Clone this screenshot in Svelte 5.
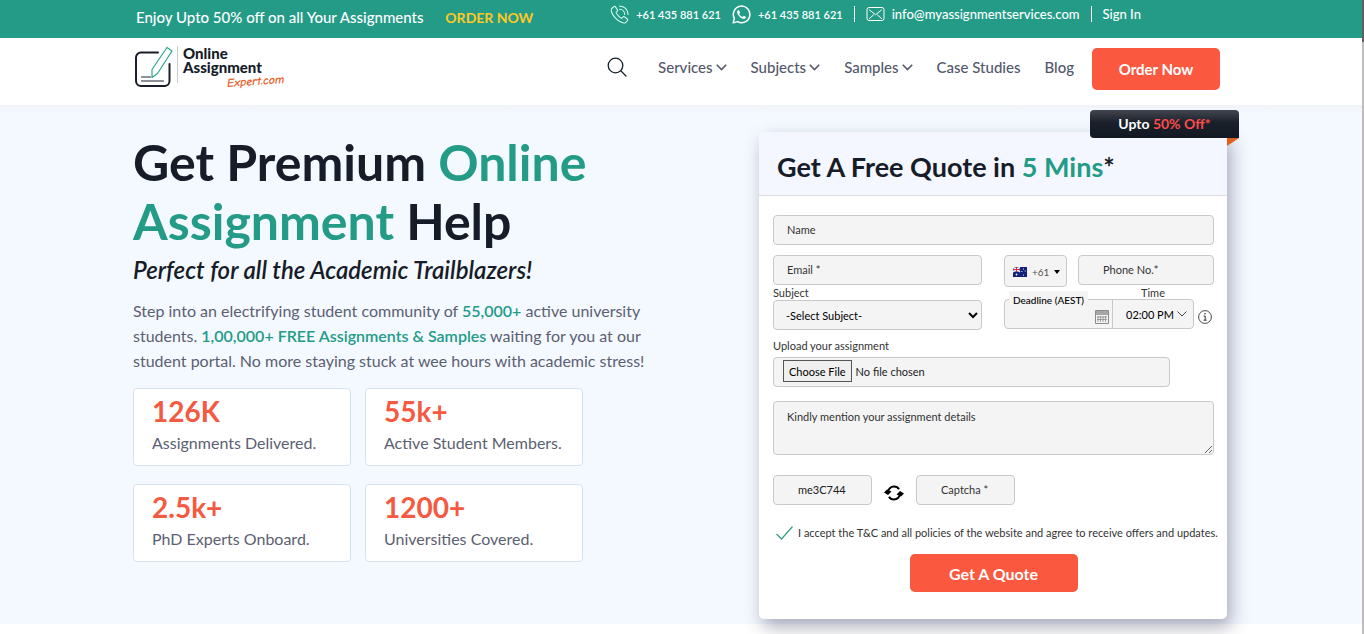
<script lang="ts">
	const nav = [
		{ label: 'Services', menu: true },
		{ label: 'Subjects', menu: true },
		{ label: 'Samples', menu: true },
		{ label: 'Case Studies', menu: false },
		{ label: 'Blog', menu: false }
	];

	const stats = [
		{ value: '126K', label: 'Assignments Delivered.' },
		{ value: '55k+', label: 'Active Student Members.' },
		{ value: '2.5k+', label: 'PhD Experts Onboard.' },
		{ value: '1200+', label: 'Universities Covered.' }
	];

	let accepted = $state(true);
</script>

<svelte:head>
	<title>Online Assignment Help</title>
</svelte:head>

<div class="page">
	<div class="topbar">
		<div class="container topbar-inner">
			<p class="promo">Enjoy Upto 50% off on all Your Assignments <a href="/order">ORDER NOW</a></p>
			<div class="contacts">
				<a class="tel" href="tel:+61435881621">
					<svg width="19" height="19" viewBox="0 0 20 20" fill="none" stroke="#d8fff4" stroke-width="1.1" stroke-linecap="round" stroke-linejoin="round">
						<path d="M4.2 1.600 1.800 3.700c-1.400 2 .4 6.600 4.200 10.400s8.500 5.800 10.500 4.400l1.900-2.200c.5-.6.3-1.200-.2-1.600l-3.100-2.300c-.5-.4-1.100-.3-1.500.2l-1.200 1.400c-1.300-.5-2.600-1.500-3.600-2.600-1-1-1.900-2.200-2.500-3.600l1.300-1.100c.5-.4.6-1 .2-1.500L5.700 1.700c-.4-.5-1-.5-1.500-.1Z" />
						<path d="M10 1c5 .1 9 4 9 9M10 4.500c3.100.1 5.500 2.400 5.500 5.500" />
					</svg>
					<span>+61 435 881 621</span>
				</a>
				<a class="tel" href="https://wa.me/61435881621">
					<svg width="19" height="19" viewBox="0 0 20 20" fill="none" stroke="#fff" stroke-width="1.600" stroke-linejoin="round">
						<path d="m1.200 18.800 1.300-4.700a8.700 8.700 0 1 1 3.400 3.400Z" />
						<path d="M7.300 5.200c-.9-.2-2 .8-1.900 2.200.2 3.300 3.900 7.100 7 7.200 1.400 0 2.400-.9 2.300-2l-2.300-1.200-1.200 1.300c-1.600-.6-2.900-1.900-3.700-3.500l1-1.200Z" fill="#fff" stroke="none" />
					</svg>
					<span>+61 435 881 621</span>
				</a>
				<i class="divider"></i>
				<a href="mailto:info@myassignmentservices.com">
					<svg width="19" height="16" viewBox="0 0 19 16" fill="none" stroke="#fff">
						<rect x="1" y="1.500" width="17" height="13" rx="2" />
						<path d="m3.500 4 6 4.700 6-4.700M3.500 12.500 7.500 9M15.500 12.500l-4-3.500" stroke-linecap="round" />
					</svg>
					<span>info@myassignmentservices.com</span>
				</a>
				<i class="divider"></i>
				<a href="/login">Sign In</a>
			</div>
		</div>
	</div>

	<header>
		<div class="container header-inner">
			<a class="logo" href="/" aria-label="Online Assignment Expert.com">
				<svg width="44" height="44" viewBox="0 0 44 44" fill="none" stroke-linecap="round" stroke-linejoin="round">
					<path d="M25 6.500H8a5 5 0 0 0-5 5V35a5 5 0 0 0 5 5h23.500a5 5 0 0 0 5-5V18" stroke="#1a1e2a" stroke-width="2" />
					<path d="M8.500 31h9M8.500 35h22" stroke="#1a1e2a" />
					<path d="m34 1.500 5 3.500-14.500 22.500-5.500 4v-8Z" stroke="#2da58d" stroke-width="1.200" />
				</svg>
				<span class="logo-text">
					<b>Online</b>
					<b>Assignment</b>
					<em>Expert.com</em>
				</span>
			</a>
			<nav>
				<button class="search" aria-label="Search">
					<svg width="20" height="20" viewBox="0 0 20 20" fill="none" stroke="#17202c" stroke-width="1.300" stroke-linecap="round">
						<circle cx="8.500" cy="8.500" r="7.300" />
						<path d="m14 14 5 5" />
					</svg>
				</button>
				{#each nav as item}
					<a href="#{item.label}">
						{item.label}
						{#if item.menu}
							<svg width="11" height="7" viewBox="0 0 11 7" fill="none" stroke="currentColor" stroke-width="1.600">
								<path d="m.8.800 4.700 4.700L10.200.800" />
							</svg>
						{/if}
					</a>
				{/each}
				<a class="order" href="/order">Order Now</a>
			</nav>
		</div>
	</header>

	<main>
		<div class="container hero">
			<section class="intro">
				<h1>Get Premium <mark>Online</mark><br /><mark>Assignment</mark> Help</h1>
				<p class="tagline">Perfect for all the Academic Trailblazers!</p>
				<p class="lead">
					Step into an electrifying student community of <strong>55,000+</strong> active university
					students. <strong>1,00,000+ FREE Assignments &amp; Samples</strong> waiting for you at our
					student portal. No more staying stuck at wee hours with academic stress!
				</p>
				<ul class="stats">
					{#each stats as stat}
						<li>
							<b>{stat.value}</b>
							<span>{stat.label}</span>
						</li>
					{/each}
				</ul>
			</section>

			<form class="quote" onsubmit={(e) => e.preventDefault()}>
				<div class="ribbon">Upto&nbsp;<span>50% Off*</span></div>
				<h2>Get A Free Quote in <mark>5 Mins</mark>*</h2>
				<div class="fields">
					<input class="field" type="text" placeholder="Name" aria-label="Name" />

					<div class="columns">
						<div class="column">
							<input class="field" type="email" placeholder="Email *" aria-label="Email" />
							<label for="subject">Subject</label>
							<select class="field subject" id="subject">
								<option>-Select Subject-</option>
							</select>
						</div>
						<div class="column">
							<div class="phone">
								<button type="button" class="code" aria-label="Country code +61">
									<svg width="14" height="10" viewBox="0 0 14 10">
										<rect width="14" height="10" fill="#10207c" />
										<path d="m0 0 7 5M7 0 0 5" stroke="#fff" stroke-width="1.200" />
										<path d="M3.500 0v5M0 2.500h7" stroke="#fff" stroke-width="1.800" />
										<path d="M3.500 0v5M0 2.500h7" stroke="#d8243c" />
										<g fill="#fff">
											<circle cx="3.500" cy="7.500" r=".9" />
											<circle cx="10.500" cy="2" r=".6" />
											<circle cx="10.500" cy="8" r=".6" />
											<circle cx="8.900" cy="4.500" r=".6" />
											<circle cx="12.200" cy="4" r=".6" />
										</g>
									</svg>
									<span>+61</span>
									<i></i>
								</button>
								<input class="field" type="tel" placeholder="Phone No.*" aria-label="Phone number" />
							</div>
							<label class="time-label" for="time">Time</label>
							<div class="deadline">
								<div class="date">
									<label for="date">Deadline (AEST)</label>
									<input id="date" type="text" />
									<svg width="14" height="14" viewBox="0 0 14 14" fill="none" stroke="#8c8c8c">
										<path d="M.5.500h13v13H.500Z" />
										<path d="M.5 2h13M.500 4h13" stroke-width="1.500" />
										<path d="M3 6v6M5.500 6v6M8 6v6M10.500 6v6M2 7h10M2 9.500h10" stroke-width=".8" />
									</svg>
								</div>
								<div class="time">
									<select id="time">
										<option>02:00 PM</option>
									</select>
									<svg width="10" height="6" viewBox="0 0 10 6" fill="none" stroke="#444">
										<path d="m.5.500 4.500 4.500L9.500.500" />
									</svg>
								</div>
								<svg class="info" width="14" height="14" viewBox="0 0 14 14" fill="none" stroke="#333">
									<circle cx="7" cy="7" r="6.400" stroke-width=".9" />
									<path d="M5.700 6h1.500v4M5.500 10.200h3.200" />
									<circle cx="7" cy="3.800" r=".8" fill="#333" stroke="none" />
								</svg>
							</div>
						</div>
					</div>

					<label class="upload-label" for="upload">Upload your assignment</label>
					<input class="field upload" id="upload" type="file" />

					<textarea class="field" placeholder="Kindly mention your assignment details" aria-label="Assignment details"></textarea>

					<div class="captcha">
						<input class="field" type="text" value="me3C744" readonly aria-label="Captcha code" />
						<button type="button" aria-label="Refresh captcha">
							<svg width="20" height="16" viewBox="0 0 20 16" fill="none" stroke="#000" stroke-width="2">
								<path d="M4 7.500C4 4 6.700 1.500 10 1.500c2.300 0 4 1 5 2.700M16 8.500c0 3.500-2.700 6-6 6-2.300 0-4-1-5-2.700" />
								<path d="M0 7.500 3 4.500l4.500 2L4 10ZM20 8.500l-3 3-4.500-2L16 6Z" fill="#000" stroke="none" />
							</svg>
						</button>
						<input class="field" type="text" placeholder="Captcha *" aria-label="Captcha" />
					</div>

					<label class="terms">
						<input type="checkbox" bind:checked={accepted} />
						<svg width="17" height="14" viewBox="0 0 17 14" fill="none" stroke="#2f9f85" stroke-width="1.200">
							{#if accepted}
								<path d="m.5 8 5 5L16.500.500" />
							{/if}
						</svg>
						<span>I accept the T&amp;C and all policies of the website and agree to receive offers and updates.</span>
					</label>

					<button class="submit">Get A Quote</button>
				</div>
			</form>
		</div>
	</main>
	<div class="scrollbar"></div>
</div>

<style>
	:global(body) {
		background: #fff;
	}

	.page {
		position: relative;
		padding-right: 2px;
		padding-bottom: 10px;
		overflow: hidden;
		font-family: Lato, 'Open Sans', sans-serif;
		font-size: 16px;
		color: #161c28;
	}

	.page *,
	.page *::before,
	.page *::after {
		box-sizing: border-box;
	}

	.scrollbar {
		position: absolute;
		top: 0;
		right: 0;
		width: 2px;
		height: 100%;
		background: linear-gradient(#606060 42px, #bdbdbd 42px);
	}

	.container {
		max-width: 1096px;
		margin: 0 auto;
	}

	a {
		color: inherit;
		text-decoration: none;
	}

	button,
	input,
	select,
	textarea {
		font-family: inherit;
		color: #222;
	}

	p,
	h1,
	h2,
	ul {
		margin: 0;
		padding: 0;
	}

	mark {
		background: none;
		color: #239b87;
	}

	.topbar {
		background: #239b87;
		color: #fff;
	}

	.topbar-inner {
		display: flex;
		height: 38px;
		padding: 4px 88px 0 3px;
		justify-content: space-between;
	}

	.promo {
		font-size: 15px;
		font-weight: 500;
		line-height: 26px;
	}

	.promo a {
		margin-left: 18px;
		font-size: 14px;
		font-weight: 700;
		color: #ffc822;
	}

	.contacts {
		display: flex;
		height: 20px;
		align-items: center;
		gap: 11px;
		font-size: 13px;
		font-weight: 500;
	}

	.contacts a {
		display: flex;
		align-items: center;
		gap: 7px;
	}

	.contacts .tel {
		font-size: 11px;
		font-weight: 600;
	}

	.divider {
		width: 1px;
		height: 16px;
		background: #fff;
	}

	header {
		background: #fff;
	}

	.header-inner {
		display: flex;
		height: 67px;
		padding-right: 9px;
		align-items: flex-start;
		justify-content: space-between;
	}

	.logo {
		display: flex;
		padding-top: 8px;
	}

	.logo-text {
		display: flex;
		flex-direction: column;
		height: 37px;
		padding-left: 5px;
		border-left: 1px solid #ccc;
		font-size: 15px;
		line-height: 14px;
	}

	.logo-text b {
		font-weight: 900;
	}

	.logo-text em {
		margin-left: 44px;
		font-family: 'Comic Neue', 'Segoe Print', cursive;
		font-size: 12px;
		font-weight: 600;
		color: #e8622c;
		transform: rotate(-4deg);
	}

	nav {
		display: flex;
		padding-top: 10px;
		align-items: flex-start;
		gap: 24px;
		font-size: 15px;
		font-weight: 500;
		line-height: 38px;
		color: #53586b;
	}

	nav a {
		display: flex;
		align-items: center;
		gap: 3px;
	}

	.search {
		display: flex;
		height: 38px;
		margin-right: 7px;
		padding: 0;
		align-items: center;
		border: 0;
		background: none;
	}

	.order {
		width: 128px;
		height: 42px;
		margin-left: -6px;
		justify-content: center;
		border-radius: 5px;
		background: #fa583f;
		font-weight: 700;
		color: #fff;
	}

	main {
		background: linear-gradient(#f1f2f9, #f4f9ff 8px);
	}

	.hero {
		display: flex;
		height: 519px;
		padding-right: 2px;
		align-items: flex-start;
		justify-content: space-between;
	}

	.intro {
		width: 530px;
		padding-top: 28px;
	}

	h1 {
		font-size: 50px;
		font-weight: 700;
		line-height: 59px;
	}

	.tagline {
		padding: 5px 0 14px;
		font-size: 24px;
		font-style: italic;
		font-weight: 600;
		line-height: 28px;
	}

	.lead {
		font-size: 16px;
		line-height: 25px;
		color: #5b6072;
	}

	.lead strong {
		font-weight: 600;
		color: #239b87;
	}

	.stats {
		display: grid;
		grid-template-columns: 218px 218px;
		gap: 18px 14px;
		margin-top: 15px;
		list-style: none;
	}

	.stats li {
		display: flex;
		flex-direction: column;
		height: 78px;
		padding: 4px 18px;
		border: 1px solid #d7e3ec;
		border-radius: 4px;
		background: #fff;
	}

	.stats b {
		font-size: 28px;
		line-height: 36px;
		color: #f45a42;
	}

	.stats span {
		font-size: 16px;
		line-height: 28px;
		color: #5b6072;
		white-space: nowrap;
	}

	.quote {
		position: relative;
		width: 468px;
		margin-top: 27px;
		border-radius: 5px;
		background: #fff;
		box-shadow: 4px 8px 18px rgba(50, 52, 85, 0.4);
	}

	.ribbon {
		position: absolute;
		top: -22px;
		right: -12px;
		display: flex;
		width: 149px;
		height: 28px;
		align-items: center;
		justify-content: center;
		border-radius: 4px 4px 0 4px;
		background: linear-gradient(#43464f, #1a202a 45%, #131922);
		font-size: 14px;
		font-weight: 700;
		line-height: 26px;
		color: #fff;
	}

	.ribbon::after {
		content: '';
		position: absolute;
		top: 28px;
		right: 0;
		border-top: 8px solid #e2601f;
		border-right: 12px solid transparent;
	}

	.ribbon span {
		color: #ff4b4b;
	}

	h2 {
		padding: 21px 18px 15px;
		border-bottom: 1px solid #dcdee2;
		border-radius: 5px 5px 0 0;
		background: #f4f7ff;
		font-size: 27px;
		font-weight: 700;
		line-height: 27px;
	}

	.fields {
		display: flex;
		flex-direction: column;
		padding: 19px 13px 27px 14px;
		font-size: 11px;
	}

	.fields label {
		line-height: 15px;
		color: #333;
	}

	.field {
		width: 100%;
		height: 30px;
		padding: 0 13px 2px;
		border: 1px solid #c9c9c9;
		border-radius: 4px;
		background: #f4f4f4;
		font-size: 11px;
	}

	.field::placeholder {
		color: #333;
		opacity: 1;
	}

	.columns {
		display: grid;
		grid-template-columns: 209px 1fr;
		gap: 22px;
		margin-top: 10px;
	}

	.column {
		display: flex;
		flex-direction: column;
	}

	.subject {
		padding: 0 0 0 8px;
		color: #000;
	}

	.phone {
		display: flex;
		gap: 11px;
		height: 30px;
	}

	.phone .field {
		flex: 1;
		min-width: 0;
		padding-left: 24px;
	}

	.code {
		display: flex;
		flex: none;
		width: 63px;
		height: 32px;
		padding: 2px 8px 0;
		align-items: center;
		gap: 5px;
		border: 1px solid #c9c9c9;
		border-radius: 4px;
		background: #f4f4f4;
		font-size: 10px;
		color: #555;
	}

	.code svg {
		flex: none;
	}

	.code i {
		border: 3px solid transparent;
		border-top: 4px solid #000;
		border-bottom: 0;
	}

	.time-label {
		padding-left: 137px;
	}

	.deadline {
		display: flex;
		height: 30px;
		margin-top: -1px;
		align-items: center;
	}

	.date,
	.time {
		position: relative;
		height: 30px;
		border: 1px solid #c9c9c9;
		background: #f4f4f4;
	}

	.date {
		width: 109px;
		border-radius: 4px 0 0 4px;
	}

	.date label {
		position: absolute;
		top: -9px;
		left: 4px;
		padding: 2px 4px 0;
		background: #f4f4f4;
		font-size: 10px;
		font-weight: 500;
		line-height: 14px;
		color: #000;
		white-space: nowrap;
	}

	.date input {
		width: 85px;
		height: 28px;
		border: 0;
		background: none;
		font-size: 11px;
	}

	.date svg {
		position: absolute;
		right: 3px;
		bottom: 4px;
	}

	.time {
		width: 82px;
		margin-left: -1px;
		border-radius: 0 4px 4px 0;
	}

	.time select {
		width: 100%;
		height: 28px;
		padding-left: 13px;
		appearance: none;
		border: 0;
		background: none;
		font-size: 11px;
		color: #000;
	}

	.time svg {
		position: absolute;
		top: 11px;
		right: 6px;
		pointer-events: none;
	}

	.info {
		margin: 6px 0 0 4px;
	}

	.upload-label {
		margin-top: 8px;
	}

	.upload {
		width: 90%;
		margin-top: 4px;
		padding: 2px 9px;
	}

	.upload::file-selector-button {
		height: 22px;
		padding: 0 5px;
		border: 1px solid #555;
		border-radius: 0;
		background: #efefef;
		font: inherit;
		color: #000;
	}

	textarea.field {
		display: block;
		height: 54px;
		margin-top: 14px;
		padding: 7px 13px;
		line-height: 15px;
		resize: vertical;
	}

	.captcha {
		display: flex;
		margin-top: 20px;
		gap: 12px;
	}

	.captcha .field {
		width: 99px;
		padding-left: 24px;
	}

	.captcha button {
		display: flex;
		padding: 6px 0 0;
		border: 0;
		align-items: center;
		background: none;
	}

	.terms {
		display: flex;
		position: relative;
		height: 15px;
		margin-top: 20px;
		padding-left: 3px;
		align-items: center;
		gap: 5px;
		white-space: nowrap;
	}

	.terms svg {
		flex: none;
	}

	.terms input {
		position: absolute;
		margin: 0;
		opacity: 0;
	}

	.submit {
		width: 168px;
		height: 38px;
		margin-top: 14px;
		align-self: center;
		border: 0;
		border-radius: 5px;
		background: #fa583f;
		font-size: 16px;
		font-weight: 700;
		color: #fff;
	}
</style>
